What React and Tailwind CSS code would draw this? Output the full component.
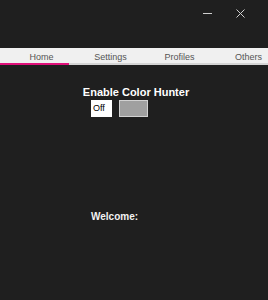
import React, { useState } from 'react';

const tabs = ['Home', 'Settings', 'Profiles', 'Others'];

const App = () => {
  const [active, setActive] = useState(0);

  return (
    <div className="w-[268px] h-[300px] bg-[#1f1f1f] overflow-hidden relative" style={{ fontFamily: '"Liberation Sans", Arial, sans-serif' }}>
      {/* title bar */}
      <div className="h-[48px] flex justify-end items-start">
        <button className="w-[33px] h-[27px] flex items-center justify-center">
          <span className="block w-[9px] h-px bg-[#cfcfcf]" />
        </button>
        <button className="w-[33px] h-[27px] mr-[11px] flex items-center justify-center">
          <svg width="9" height="9" viewBox="0 0 9 9" fill="none" stroke="#cfcfcf" strokeWidth="1">
            <path d="M0.5 0.5 L8.5 8.5 M8.5 0.5 L0.5 8.5" />
          </svg>
        </button>
      </div>

      {/* tabs */}
      <div className="h-[17px] bg-[#f0f0f0] flex w-[300px]">
        {tabs.map((tab, i) => (
          <button
            key={tab}
            onClick={() => setActive(i)}
            className={`w-[69px] shrink-0 h-full flex items-start justify-center pl-[14px] pt-[4px] text-[9px] leading-[10px] text-[#555] border-b-2 ${
              active === i ? 'border-[#e0107a]' : 'border-[#d4d4d4]'
            }`}
          >
            {tab}
          </button>
        ))}
      </div>

      {/* content */}
      <div className="pt-[21px]">
        <h2 className="text-center pl-[4px] text-[11px] leading-[13px] font-bold text-white">Enable Color Hunter</h2>
        <div className="flex gap-[7px] mt-[1px] ml-[91px]">
          <div className="w-[21px] h-[17px] bg-white flex items-center pl-[2px] text-[9px] text-black">Off</div>
          <div className="w-[29px] h-[17px] bg-[#a0a0a0] border border-[#d2d2d2]" />
        </div>
      </div>

      <div className="pl-[91px] mt-[93px] text-[10px] leading-[13px] font-bold text-[#f2f2f2]">Welcome:</div>
    </div>
  );
};

export default App;
